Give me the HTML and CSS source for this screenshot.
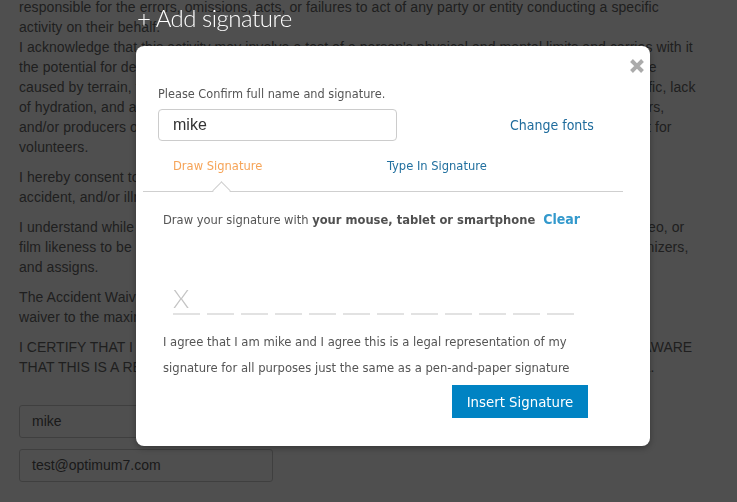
FILE: index.html
```html
<!DOCTYPE html>
<html>
<head>
<meta charset="utf-8">
<link rel="stylesheet" href="styles.css">
</head>
<body>
<div class="page">
  <p class="para">responsible for the errors, omissions, acts, or failures to act of any party or entity conducting a specific<br>activity on their behalf.<br>I acknowledge that this activity may involve a test of a person's physical and mental limits and carries with it<br>the potential for death, serious injury, and property loss. The risks include, but are not limited to, those<br>caused by terrain, facilities, temperature, weather, condition of participants, equipment, vehicular traffic, lack<br>of hydration, and actions of other people including, but not limited to, participants, volunteers, monitors,<br>and/or producers of the activity. These risks are not only inherent to participants, but are also present for<br>volunteers.</p>
  <p class="para">I hereby consent to receive medical treatment which may be deemed advisable in the event of injury,<br>accident, and/or illness during this activity.</p>
  <p class="para">I understand while participating in this activity, I may be photographed. I agree to allow my photo, video, or<br>film likeness to be used for any legitimate purpose by the activity holders, producers, sponsors, organizers,<br>and assigns.</p>
  <p class="para">The Accident Waiver and Release of Liability shall be construed broadly to provide a release and<br>waiver to the maximum extent permissible under applicable law.</p>
  <p class="para para-caps">I CERTIFY THAT I HAVE READ THIS RELEASE AND I FULLY UNDERSTAND ITS CONTENT. I AM AWARE<br>THAT THIS IS A RELEASE OF LIABILITY AND CONTRACT AND I SIGN IT OF MY OWN FREE WILL.</p>
  <div class="fields">
    <div class="field">mike</div>
    <div class="field">test@optimum7.com</div>
  </div>
</div>

<div class="overlay"></div>

<div class="dialog">
  <h1 class="dialog-title">+ Add signature</h1>
  <div class="modal">
    <button class="close" aria-label="Close">
      <svg width="16" height="16" viewBox="0 0 16 16"><path d="M2.5 2.5 L13.5 13.5 M13.5 2.5 L2.5 13.5" stroke="#ababab" stroke-width="4" stroke-linecap="butt"/></svg>
    </button>
    <div class="head">
      <p class="label">Please Confirm full name and signature.</p>
      <div class="name-row">
        <div class="name-input">mike</div>
        <a class="fonts-link">Change fonts</a>
      </div>
    </div>
    <div class="tabs">
      <span class="tab tab-active">Draw Signature</span>
      <span class="tab">Type In Signature</span>
    </div>
    <div class="pane">
      <p class="hint">Draw your signature with <b>your mouse, tablet or smartphone</b><a class="clear">Clear</a></p>
      <div class="sig-area">
        <span class="sig-x">X</span>
        <div class="dashes">
          <span></span><span></span><span></span><span></span><span></span><span></span>
          <span></span><span></span><span></span><span></span><span></span><span></span>
        </div>
      </div>
      <p class="agree">I agree that I am mike and I agree this is a legal representation of my<br>signature for all purposes just the same as a pen-and-paper signature</p>
      <div class="actions"><button class="insert">Insert Signature</button></div>
    </div>
  </div>
</div>
</body>
</html>
```

FILE: styles.css
```css
* { box-sizing: border-box; }
html, body { margin: 0; padding: 0; }
body {
  background: #fff;
  width: 737px;
  height: 502px;
  overflow: hidden;
  font-family: "Liberation Sans", Arial, sans-serif;
}
.page {
  padding: 0 19px;
  margin-top: -3px;
  color: #666;
  font-size: 14px;
  line-height: 20px;
  letter-spacing: 0.08px;
}
.para { margin: 0 0 10px; white-space: nowrap; }
.para-caps { letter-spacing: 0; }
.fields {
  margin-top: 28px;
  display: flex;
  flex-direction: column;
  gap: 11px;
}
.field {
  width: 254px;
  height: 33px;
  border: 1px solid #ccc;
  border-radius: 3px;
  padding: 0 12px;
  line-height: 31px;
  color: #555;
  font-size: 14px;
  letter-spacing: 0;
}
.overlay {
  position: fixed;
  inset: 0;
  background: rgba(0, 0, 0, 0.69);
}
.dialog {
  position: absolute;
  left: 136px;
  top: 0;
  width: 514px;
}
.dialog-title {
  margin: 0 0 0 1px;
  height: 46px;
  padding-top: 3px;
  font-family: Lato, "Liberation Sans", sans-serif;
  font-weight: 300;
  font-size: 24px;
  line-height: 30px;
  color: #fff;
  letter-spacing: -0.5px;
}
.modal {
  position: relative;
  background: #fff;
  border-radius: 8px;
  height: 400px;
  font-family: "DejaVu Sans Condensed", "DejaVu Sans", sans-serif;
  font-stretch: condensed;
  box-shadow: 0 2px 6px rgba(0,0,0,0.3);
}
.close {
  position: absolute;
  right: 5px;
  top: 12px;
  width: 16px;
  height: 16px;
  padding: 0;
  border: 0;
  background: none;
  display: block;
}
.close svg { display: block; }
.head { padding: 40px 0 0 22px; }
.label {
  margin: 0;
  font-size: 12.6px;
  line-height: 16px;
  color: #555;
}
.name-row {
  margin-top: 7px;
  display: flex;
  align-items: center;
}
.name-input {
  width: 239px;
  height: 32px;
  border: 1px solid #ccc;
  border-radius: 4px;
  padding: 0 14px;
  font-family: "Liberation Sans", Arial, sans-serif;
  font-size: 16px;
  line-height: 30px;
  color: #333;
}
.fonts-link {
  margin-left: 113px;
  font-size: 14px;
  color: #1e6b9c;
}
.tabs {
  position: relative;
  margin: 17px 27px 0 7px;
  padding: 0 0 17px 30px;
  border-bottom: 1px solid #cfcfcf;
  display: flex;
  font-size: 12.8px;
  line-height: 16px;
}
.tab { color: #22709f; }
.tab-active {
  width: 214px;
  color: #f6a458;
  position: relative;
}
.tab-active::after {
  content: "";
  position: absolute;
  left: 42px;
  bottom: -23px;
  width: 12px;
  height: 12px;
  background: #fff;
  border-top: 1px solid #cfcfcf;
  border-left: 1px solid #cfcfcf;
  transform: rotate(45deg);
}
.pane { padding: 18px 0 0 27px; }
.hint {
  margin: 0;
  font-size: 12.8px;
  line-height: 18px;
  color: #555;
}
.hint b { color: #505050; }
.clear {
  margin-left: 8px;
  font-weight: bold;
  font-size: 14px;
  color: #3399cc;
}
.sig-area {
  height: 86px;
  padding-left: 10px;
  display: flex;
  flex-direction: column;
  justify-content: flex-end;
}
.sig-x {
  font-family: Lato, "Liberation Sans", sans-serif;
  font-weight: 300;
  font-size: 26px;
  line-height: 20px;
  color: #c4c4c4;
  margin-bottom: 5px;
}
.dashes {
  display: flex;
  gap: 7px;
}
.dashes span {
  width: 27px;
  height: 2px;
  background: #e2e2e2;
}
.agree {
  margin: 14px 0 0;
  font-size: 12.9px;
  line-height: 26px;
  color: #555;
}
.actions {
  margin-top: 4px;
  padding-left: 289px;
}
.insert {
  width: 136px;
  height: 33px;
  border: 0;
  border-radius: 0;
  background: #0083c3;
  color: #fff;
  font-family: "DejaVu Sans Condensed", "DejaVu Sans", sans-serif;
  font-stretch: condensed;
  font-size: 14.8px;
  padding: 0;
}
```
